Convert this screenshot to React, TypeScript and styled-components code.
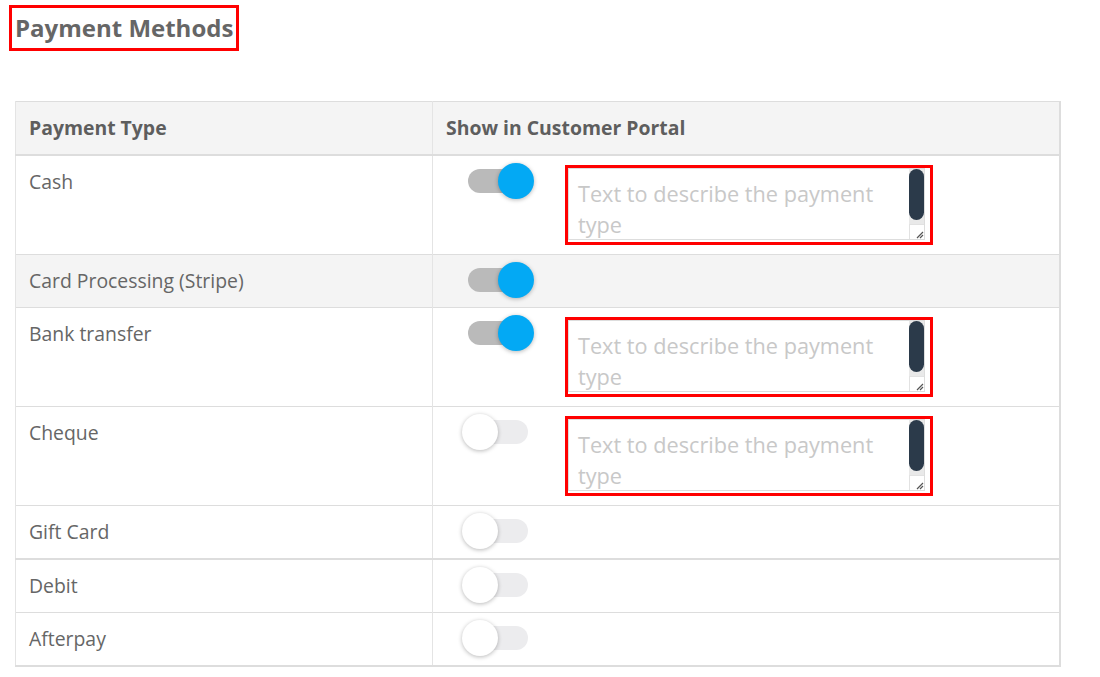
import React from 'react';
import styled, { createGlobalStyle } from 'styled-components';

const Global = createGlobalStyle`
  html, body { margin: 0; padding: 0; background: #fff; }
  body { font-family: "Open Sans", "Liberation Sans", sans-serif; color: #666; }
  * { box-sizing: border-box; }
`;

const Page = styled.div`
  padding: 5px 0 0 9px;
`;

const Title = styled.h2`
  display: inline-block;
  margin: 0;
  padding: 0 3px;
  font-size: 24px;
  line-height: 40px;
  font-weight: 700;
  color: #666;
  border: 3px solid #ff0000;
`;

const Table = styled.table`
  margin: 50px 0 0 6px;
  width: 1046px;
  table-layout: fixed;
  border-collapse: collapse;
  border: 1px solid #ddd;
  border-bottom-width: 2px;
  border-right-width: 2px;
`;

const HeadCell = styled.th`
  background: #f4f4f4;
  padding: 13px;
  text-align: left;
  font-size: 19.4px;
  line-height: 26px;
  font-weight: 700;
  color: #5e5e5e;
  border-bottom: 2px solid #ddd;
  border-left: 1px solid #e4e4e4;
`;

const Row = styled.tr<{ $striped?: boolean; $thickTop?: boolean }>`
  background: ${(p) => (p.$striped ? '#f4f4f4' : '#fff')};
  border-top: ${(p) => (p.$thickTop ? '2px' : '1px')} solid #ddd;
`;

const Cell = styled.td`
  padding: 13px;
  vertical-align: top;
  font-size: 19.4px;
  line-height: 26px;
  color: #666;
  border-left: 1px solid #e4e4e4;
`;

const Controls = styled.div`
  display: flex;
  align-items: flex-start;
  padding-left: 16px;
`;

const Switch = styled.button<{ $on: boolean }>`
  position: relative;
  flex: none;
  width: 72px;
  height: 24px;
  padding: 0;
  margin: 0;
  border: 0;
  background: transparent;
  cursor: pointer;
  &::before {
    content: '';
    position: absolute;
    top: 0;
    bottom: 0;
    left: 6px;
    right: 6px;
    border-radius: 12px;
    background: ${(p) => (p.$on ? '#bababa' : '#ececee')};
  }
  &::after {
    content: '';
    position: absolute;
    top: -6px;
    left: ${(p) => (p.$on ? '36px' : '0')};
    width: 36px;
    height: 36px;
    border-radius: 50%;
    background: ${(p) => (p.$on ? '#03a9f4' : '#fff')};
    box-shadow: 0 1px 4px rgba(0, 0, 0, 0.28);
  }
`;

const DescBox = styled.div`
  position: relative;
  flex: none;
  margin: -4px 0 -4px 31px;
  width: 368px;
  height: 80px;
  padding: 0 5px 2px 0;
  border: 3px solid #ff0000;
`;

const Desc = styled.textarea`
  display: block;
  width: 357px;
  height: 72px;
  margin: 0;
  padding: 9px 26px 0 9px;
  border: 1px solid #ddd;
  font-family: "Open Sans", "Liberation Sans", sans-serif;
  font-size: 21.7px;
  line-height: 31px;
  color: #555;
  resize: none;
  overflow: hidden;
  outline: none;
  &::placeholder { color: #c8c8c8; }
`;

const Rail = styled.div`
  position: absolute;
  top: 1px;
  left: 341px;
  width: 15px;
  height: 55px;
  background: #e9e9e9;
`;

const Thumb = styled.div`
  width: 15px;
  height: 51px;
  border-radius: 8px;
  background: #2b3a4a;
`;

const Resizer = styled.div`
  position: absolute;
  top: 56px;
  left: 341px;
  width: 15px;
  height: 15px;
  background: #fff;
  border-left: 1px solid #e2e2e2;
  border-top: 1px solid #e2e2e2;
  display: flex;
  align-items: flex-end;
  justify-content: flex-end;
`;

type Item = { name: string; on: boolean; desc?: boolean; striped?: boolean; thickTop?: boolean };

const items: Item[] = [
  { name: 'Cash', on: true, desc: true },
  { name: 'Card Processing (Stripe)', on: true, striped: true },
  { name: 'Bank transfer', on: true, desc: true },
  { name: 'Cheque', on: false, desc: true },
  { name: 'Gift Card', on: false },
  { name: 'Debit', on: false, thickTop: true },
  { name: 'Afterpay', on: false },
];

const Grip = () => (
  <svg width="9" height="9" viewBox="0 0 9 9">
    <path d="M8 2 L2 8 M8 5 L5 8" stroke="#555" strokeWidth="1.2" />
  </svg>
);

export default function App() {
  return (
    <>
      <Global />
      <Page>
        <Title>Payment Methods</Title>
        <Table>
          <colgroup>
            <col style={{ width: 417 }} />
            <col />
          </colgroup>
          <thead>
            <tr>
              <HeadCell>Payment Type</HeadCell>
              <HeadCell>Show in Customer Portal</HeadCell>
            </tr>
          </thead>
          <tbody>
            {items.map((it) => (
              <Row key={it.name} $striped={it.striped} $thickTop={it.thickTop}>
                <Cell>{it.name}</Cell>
                <Cell>
                  <Controls>
                    <Switch $on={it.on} aria-label={it.name} />
                    {it.desc && (
                      <DescBox>
                        <Desc placeholder="Text to describe the payment type" />
                        <Rail>
                          <Thumb />
                        </Rail>
                        <Resizer>
                          <Grip />
                        </Resizer>
                      </DescBox>
                    )}
                  </Controls>
                </Cell>
              </Row>
            ))}
          </tbody>
        </Table>
      </Page>
    </>
  );
}
